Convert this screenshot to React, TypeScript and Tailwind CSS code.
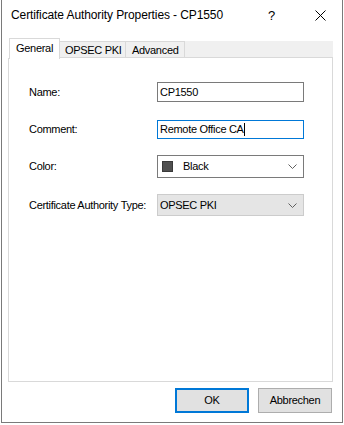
const Chevron = () => (
  <svg width="9" height="5" viewBox="0 0 9 5" className="text-[#606060]">
    <path d="M0.5 0.5 L4.5 4.5 L8.5 0.5" fill="none" stroke="currentColor" strokeWidth="1" />
  </svg>
);

const Row = ({ label, className, children }: { label: string; className: string; children: React.ReactNode }) => (
  <div className={`flex items-center ${className}`}>
    <div className="w-[148px] pl-[20px] shrink-0 whitespace-nowrap">{label}</div>
    <div className="w-[147px] h-full">{children}</div>
  </div>
);

export default function App() {
  return (
    <div className="w-[344px] h-[425px] bg-white text-black text-[11px] tracking-[-0.3px] leading-none font-['Liberation_Sans',Arial,sans-serif]">
      <div className="ml-px w-[342px] h-[423px] border-x border-b border-[#7a7a7a] flex flex-col">
        {/* title bar */}
        <div className="h-[30px] flex items-center pl-[9px] shrink-0">
          <span className="text-[12px] tracking-[-0.1px] whitespace-nowrap">Certificate Authority Properties - CP1550</span>
          <span className="ml-auto mr-[40px] text-[13px]">?</span>
          <svg width="11" height="11" viewBox="0 0 11 11" className="mr-[16px]">
            <path d="M0.5 0.5 L10.5 10.5 M10.5 0.5 L0.5 10.5" stroke="#000" strokeWidth="1" />
          </svg>
        </div>

        <div className="ml-[6px] w-[325px] mt-[8px] flex flex-col">
          {/* tabs */}
          <div className="flex items-end h-[20px] whitespace-nowrap">
            <div className="h-[21px] -mb-px w-[51px] ml-px bg-white border-x border-t border-[#d9d9d9] pl-[6px] pt-[4px] relative z-10">
              General
            </div>
            <div className="h-[17px] w-[66px] bg-[#f0f0f0] border-t border-r border-b border-[#d9d9d9] pl-[5px] pt-[3px]">
              OPSEC PKI
            </div>
            <div className="h-[17px] w-[59px] bg-[#f0f0f0] border-t border-r border-b border-[#d9d9d9] pl-[6px] pt-[3px]">
              Advanced
            </div>
            <div className="flex-1 h-[17px] bg-[#f0f0f0] border-b border-[#d9d9d9]" />
          </div>

          {/* panel */}
          <div className="h-[324px] border-x border-b border-[#d9d9d9] flex flex-col">
            <Row label="Name:" className="mt-[24px] h-[20px]">
              <div className="h-full border border-[#7a7a7a] flex items-center pl-[2px]">CP1550</div>
            </Row>
            <Row label="Comment:" className="mt-[18px] h-[19px]">
              <div className="h-full border border-[#0078d7] flex items-center pl-[2px]">
                Remote Office CA<span className="w-px h-[13px] bg-black" />
              </div>
            </Row>
            <Row label="Color:" className="mt-[16px] h-[23px]">
              <div className="h-full border border-[#7a7a7a] flex items-center pl-[4px] pr-[6px]">
                <span className="w-[11px] h-[11px] bg-[#505050] border border-[#3a3a3a]" />
                <span className="ml-[10px]">Black</span>
                <span className="ml-auto"><Chevron /></span>
              </div>
            </Row>
            <Row label="Certificate Authority Type:" className="mt-[16px] h-[22px]">
              <div className="h-full bg-[#e5e5e5] border border-[#cccccc] flex items-center pl-[2px] pr-[6px]">
                <span>OPSEC PKI</span>
                <span className="ml-auto"><Chevron /></span>
              </div>
            </Row>
          </div>

          {/* buttons */}
          <div className="flex justify-end gap-[9px] mt-[6px] pr-[1px]">
            <button className="w-[74px] h-[25px] bg-[#e1e1e1] border-2 border-[#0078d7] flex items-center justify-center">
              OK
            </button>
            <button className="w-[74px] h-[25px] bg-[#e1e1e1] border border-[#adadad] flex items-center justify-center whitespace-nowrap">
              Abbrechen
            </button>
          </div>
        </div>
      </div>
    </div>
  );
}
